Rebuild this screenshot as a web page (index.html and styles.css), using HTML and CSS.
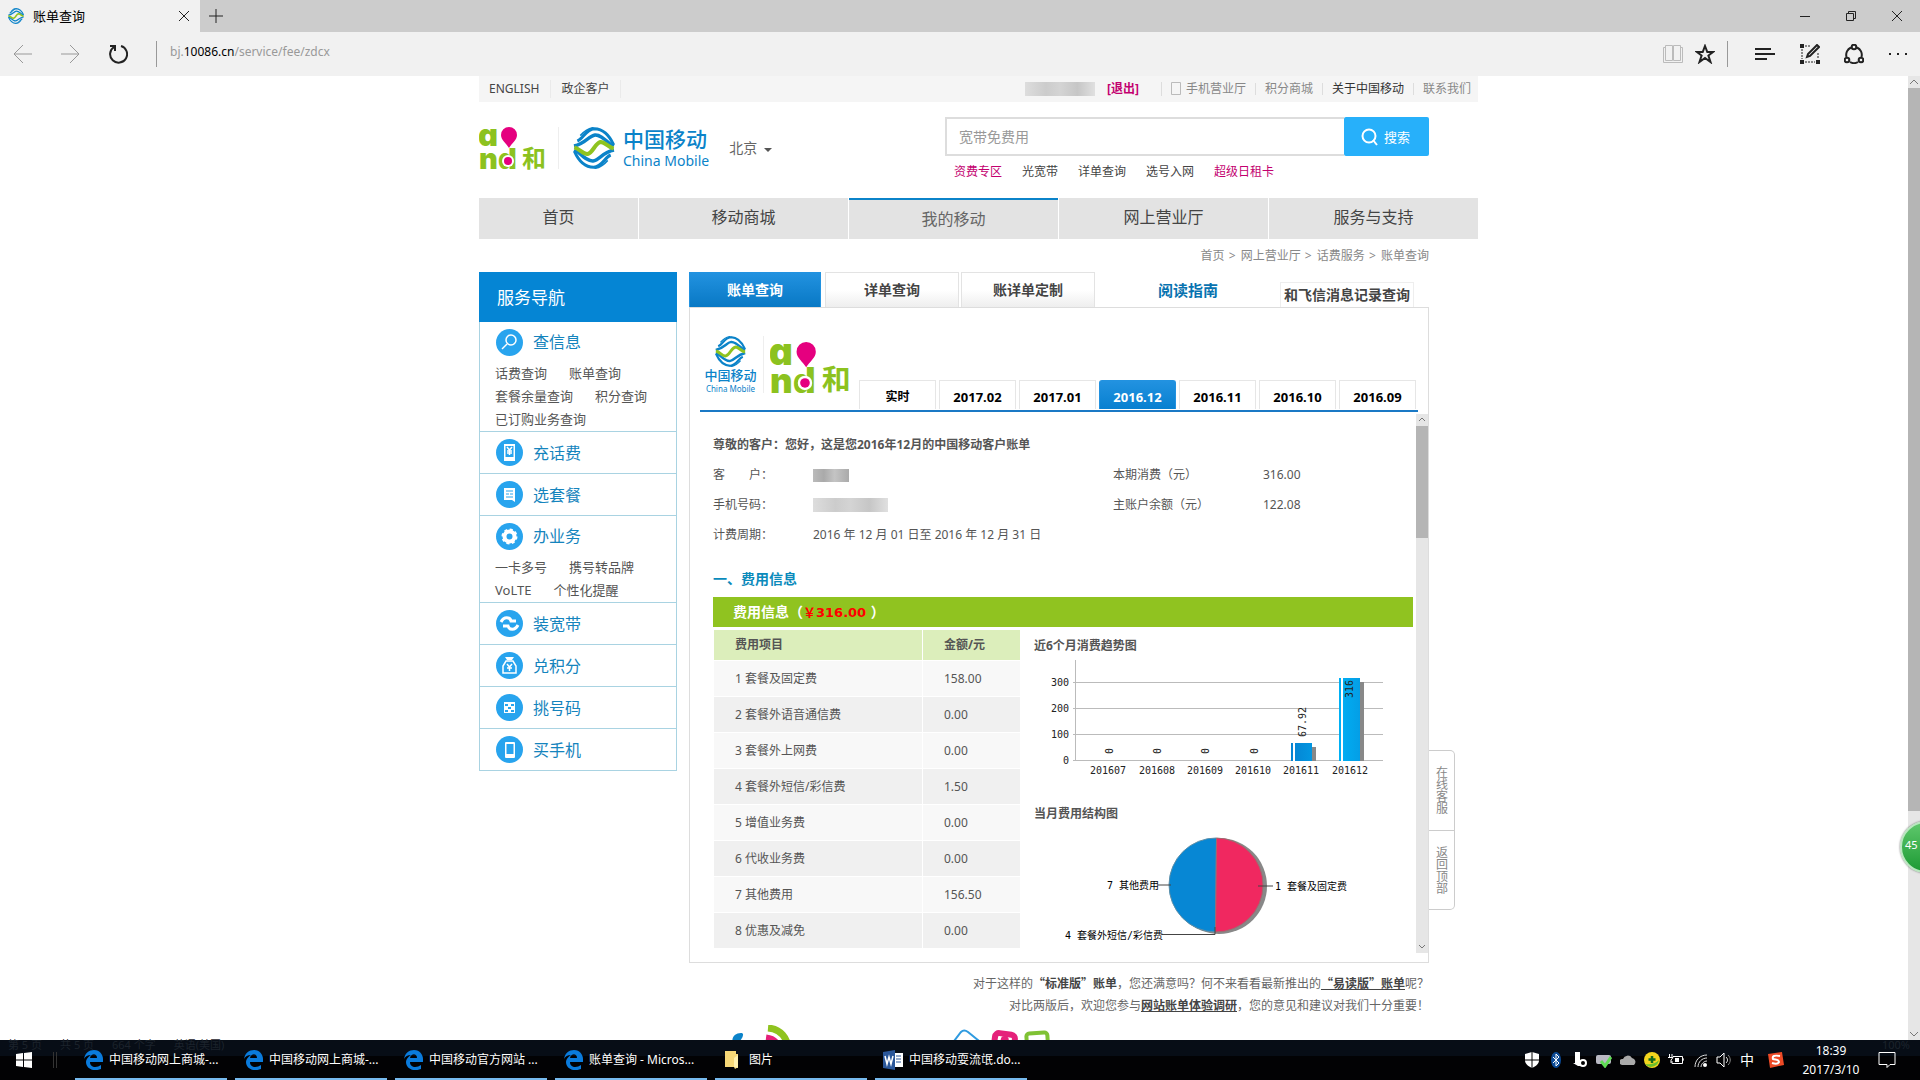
FILE: index.html
```html
<!DOCTYPE html>
<html lang="zh-CN">
<head>
<meta charset="utf-8">
<title>账单查询</title>
<link rel="stylesheet" href="styles.css">
</head>
<body>
<svg class="defs" aria-hidden="true">
  <symbol id="cm" viewBox="0 0 126 126">
    <g id="cm-half" fill="none" stroke="#0b83c9">
      <path d="M13 42C32 34 38 7 64 5C92 6 110 26 122 54" stroke-width="9"/>
      <path d="M3 57C38 50 46 27 66 24C84 23 98 40 121 59" stroke-width="10"/>
      <path d="M22 26C34 12 46 4 62 2" stroke-width="5"/>
    </g>
    <use href="#cm-half" transform="rotate(180 63 63)"/>
    <path d="M4 61C22 66 30 83 44 81C60 77 66 49 82 45C96 44 104 60 122 65" fill="none" stroke="#8fc31f" stroke-width="12"/>
  </symbol>
  <symbol id="edge" viewBox="0 0 20 20">
    <path d="M1 9C2 3 6 0 11 0c6 0 9 5 9 9v3H7c0 6 7 6 11 3v4C11 22 3 19 3 12c0-3 2-5 5-7C4 5 2 7 1 9zM7 8h7c0-5-6-5-7 0z" fill="#0a7bdc"/>
  </symbol>
</svg>

<header class="titlebar">
  <div class="wtab">
    <svg width="16" height="16"><use href="#cm"/></svg>
    <span>账单查询</span>
    <button aria-label="关闭标签页"><svg width="12" height="12" viewBox="0 0 12 12"><path d="M1 1l10 10M11 1L1 11"/></svg></button>
  </div>
  <button class="plus" aria-label="新标签页"><svg width="14" height="14" viewBox="0 0 14 14"><path d="M7 0v14M0 7h14"/></svg></button>
  <div class="winbtns">
    <button aria-label="最小化"><svg width="12" height="12" viewBox="0 0 12 12"><path d="M1 6.5h10"/></svg></button>
    <button aria-label="还原"><svg width="12" height="12" viewBox="0 0 12 12"><path d="M1.5 3.5h7v7h-7zM3.5 3V1.500h7v7H9"/></svg></button>
    <button aria-label="关闭"><svg width="12" height="12" viewBox="0 0 12 12"><path d="M1 1l10 10M11 1L1 11"/></svg></button>
  </div>
</header>
<nav class="toolbar" aria-label="浏览器">
  <button class="dim" aria-label="后退"><svg width="20" height="20" viewBox="0 0 20 20"><path d="M19 10H1M10 1L1 10l9 9"/></svg></button>
  <button class="dim" aria-label="前进"><svg width="20" height="20" viewBox="0 0 20 20"><path d="M1 10h18M10 1l9 9-9 9"/></svg></button>
  <button aria-label="刷新"><svg width="20" height="20" viewBox="0 0 20 20"><path d="M6 3a8.500 8.500 0 1 0 7-1M2 2h5v5" stroke-width="2"/></svg></button>
  <i class="sep"></i>
  <p class="url">bj.<b>10086.cn</b>/service/fee/zdcx</p>
  <div class="tools">
    <button class="faint" aria-label="阅读视图"><svg width="20" height="20" viewBox="0 0 20 20"><path d="M2.500 3.500h-2v15h19v-15h-2M2.500 1.500h7v15h-7zM10.500 1.500h7v15h-7z"/></svg></button>
    <button aria-label="收藏"><svg width="20" height="20" viewBox="0 0 20 20"><path d="M10 2l2.300 6H18l-4.600 3.500L15.500 18 10 14l-5.500 4 2.100-6.500L2 8h5.700z" stroke-width="2"/></svg></button>
    <i class="sep"></i>
    <button aria-label="中心"><svg width="20" height="20" viewBox="0 0 20 20"><path d="M0 5h16M0 10h20M0 15h12" stroke-width="2"/></svg></button>
    <button aria-label="笔记"><svg width="20" height="20" viewBox="0 0 20 20"><path d="M5 2h6M2 5v10M5 18h10M18 9v6" stroke-dasharray="2 1"/><path d="M0 0h4v4H0zM0 16h4v4H0zM16 16h4v4h-4z" fill="#222" stroke="none"/><path d="M7 13l1-3 9-9 2 2-9 9z" stroke-width="2"/></svg></button>
    <button aria-label="分享"><svg width="20" height="20" viewBox="0 0 20 20"><path d="M7 3.500A8 8 0 0 0 2.500 13M13 3.500A8 8 0 0 1 17.500 13M6 18a8 8 0 0 0 8 0" stroke-width="2"/><g stroke-width="2"><circle cx="10" cy="3" r="2.300"/><circle cx="3" cy="16" r="2.300"/><circle cx="17" cy="16" r="2.300"/></g></svg></button>
    <button aria-label="更多"><svg width="20" height="20" viewBox="0 0 20 20"><path d="M1 9h2v2H1zM9 9h2v2H9zM17 9h2v2h-2z" fill="#222" stroke="none"/></svg></button>
  </div>
</nav>

<div class="viewport">
  <div class="page">
    <div class="site">
      <div class="topbar">
        <a href="#">ENGLISH</a><a href="#">政企客户</a>
        <div class="user">
          <span class="mosaic m-user"></span>
          <a class="logout" href="#">[退出]</a>
          <a class="mobile" href="#"><svg width="10" height="14" viewBox="0 0 10 14"><path d="M.5.5h9v12h-9z" fill="none" stroke="#bbb"/></svg>手机营业厅</a>
          <a href="#">积分商城</a><a class="dark" href="#">关于中国移动</a><a href="#">联系我们</a>
        </div>
      </div>

      <div class="masthead">
        <svg class="and" width="68" height="44" viewBox="0 0 68 44">
          <text class="latin single-a" x="-1" y="19" font-size="31">a</text>
          <text class="latin" x="0" y="42" font-size="29">n</text>
          <text class="latin" x="19" y="42" font-size="29">d</text>
          <text class="he" x="43" y="40" font-size="24">和</text>
          <path d="M30 0a8 8 0 0 1 8 8c0 5-5 8-8 13c-3-5-8-8-8-13a8 8 0 0 1 8-8z" fill="#e5007f"/>
          <circle cx="29" cy="34" r="6" fill="#fff"/><circle cx="29" cy="34" r="4" fill="#e5007f"/>
        </svg>
        <a class="brand" href="#">
          <svg width="42" height="42"><use href="#cm"/></svg>
          <span><b>中国移动</b><em>China Mobile</em></span>
        </a>
        <button class="city">北京<i></i></button>
        <div class="searchbox">
          <form class="search">
            <input type="text" aria-label="搜索" placeholder="宽带免费用">
            <button type="button"><svg width="18" height="18" viewBox="0 0 18 18"><circle cx="8" cy="8" r="6.500"/><path d="M12 12l4 5"/></svg>搜索</button>
          </form>
          <div class="hot"><a class="pink" href="#">资费专区</a><a href="#">光宽带</a><a href="#">详单查询</a><a href="#">选号入网</a><a class="pink" href="#">超级日租卡</a></div>
        </div>
      </div>

      <nav class="mainnav"><a href="#">首页</a><a href="#">移动商城</a><a class="on" href="#">我的移动</a><a href="#">网上营业厅</a><a href="#">服务与支持</a></nav>
      <p class="crumbs"><a href="#">首页</a> &gt; <a href="#">网上营业厅</a> &gt; <a href="#">话费服务</a> &gt; <a href="#">账单查询</a></p>

      <div class="columns">
        <aside class="side">
          <h2>服务导航</h2>
          <section class="has-sub">
            <h3><svg viewBox="0 0 27 27"><circle class="disc" cx="13.500" cy="13.500" r="13.500"/><circle class="ln" cx="15" cy="11" r="5"/><path class="ln" d="M11 15l-5 5"/></svg>查信息</h3>
            <div class="subs"><a href="#">话费查询</a><a href="#">账单查询</a><br><a href="#">套餐余量查询</a><a href="#">积分查询</a><br><a href="#">已订购业务查询</a></div>
          </section>
          <section><h3><svg viewBox="0 0 27 27"><circle class="disc" cx="13.500" cy="13.500" r="13.500"/><path class="wt" d="M8 5h11v17H8z"/><path d="M9.500 7h8v11h-8z" fill="#28a4ee"/><path class="ln" d="M11 8l2.500 3L16 8M13.500 11v5M11 12h5M11 14h5"/></svg>充话费</h3></section>
          <section><h3><svg viewBox="0 0 27 27"><circle class="disc" cx="13.500" cy="13.500" r="13.500"/><path class="wt" d="M8 7h11v14l-3-2H8z"/><path d="M10 10h7M10 13h3M14 13h3M10 16h7" stroke="#28a4ee" fill="none"/></svg>选套餐</h3></section>
          <section class="has-sub">
            <h3><svg viewBox="0 0 27 27"><circle class="disc" cx="13.500" cy="13.500" r="13.500"/><circle cx="13.500" cy="13.500" r="5" fill="none" stroke="#fff" stroke-width="4"/><circle cx="13.500" cy="13.500" r="7" fill="none" stroke="#fff" stroke-width="2" stroke-dasharray="3 2.500"/></svg>办业务</h3>
            <div class="subs"><a href="#">一卡多号</a><a href="#">携号转品牌</a><br><a href="#">VoLTE</a><a href="#">个性化提醒</a></div>
          </section>
          <section><h3><svg viewBox="0 0 27 27"><circle class="disc" cx="13.500" cy="13.500" r="13.500"/><path d="M5 12c3-6 9-5 10-1h5M22 15c-3 6-9 5-10 1H7" fill="none" stroke="#fff" stroke-width="3"/></svg>装宽带</h3></section>
          <section><h3><svg viewBox="0 0 27 27"><circle class="disc" cx="13.500" cy="13.500" r="13.500"/><path class="wt" d="M9 5h9l-2 3h-5z"/><path class="ln" d="M10 9h7l3 5v7H7v-7zM11 12l2.500 3 2.500-3M13.500 15v4M11 16h5"/></svg>兑积分</h3></section>
          <section><h3><svg viewBox="0 0 27 27"><circle class="disc" cx="13.500" cy="13.500" r="13.500"/><path class="wt" d="M8 8h11v11H8z"/><path d="M9 10h3v2H9zM15 10h3v2h-3zM12 13h3v2h-3zM9 16h3v2H9zM15 16h3v2h-3z" fill="#28a4ee"/></svg>挑号码</h3></section>
          <section><h3><svg viewBox="0 0 27 27"><circle class="disc" cx="13.500" cy="13.500" r="13.500"/><rect x="9" y="6" width="10" height="16" rx="1" class="wt"/><path d="M10.500 8h7v10h-7z" fill="#28a4ee"/></svg>买手机</h3></section>
        </aside>

        <main class="main">
          <div class="tabs">
            <a class="tab on" href="#">账单查询</a><a class="tab" href="#">详单查询</a><a class="tab" href="#">账详单定制</a>
            <a class="guide" href="#">阅读指南</a><a class="feixin" href="#">和飞信消息记录查询</a>
          </div>
          <div class="panel">
            <div class="billhead">
              <div class="mini"><svg width="31" height="31"><use href="#cm"/></svg><b>中国移动</b><em>China Mobile</em></div>
              <svg class="and2" width="82" height="53" viewBox="0 0 68 44">
                <text class="latin single-a" x="-1" y="19" font-size="31">a</text>
                <text class="latin" x="0" y="42" font-size="29">n</text>
                <text class="latin" x="19" y="42" font-size="29">d</text>
                <text class="he" x="43" y="40" font-size="24">和</text>
                <path d="M30 0a8 8 0 0 1 8 8c0 5-5 8-8 13c-3-5-8-8-8-13a8 8 0 0 1 8-8z" fill="#e5007f"/>
                <circle cx="29" cy="34" r="6" fill="#fff"/><circle cx="29" cy="34" r="4" fill="#e5007f"/>
              </svg>
              <div class="months"><a class="now" href="#">实时</a><a href="#">2017.02</a><a href="#">2017.01</a><a class="on" href="#">2016.12</a><a href="#">2016.11</a><a href="#">2016.10</a><a href="#">2016.09</a></div>
            </div>
            <div class="scroll">
              <div class="bill">
                <p class="hello">尊敬的客户：您好，这是您2016年12月的中国移动客户账单</p>
                <dl class="facts">
                  <dt>客&emsp;&emsp;户：</dt><dd><span class="mosaic m-name"></span></dd><dt>本期消费（元）</dt><dd>316.00</dd>
                  <dt>手机号码：</dt><dd><span class="mosaic m-phone"></span></dd><dt>主账户余额（元）</dt><dd>122.08</dd>
                  <dt>计费周期：</dt><dd>2016 年 12 月 01 日至 2016 年 12 月 31 日</dd>
                </dl>
                <h2>一、费用信息</h2>
                <h3>费用信息（<strong>￥316.00 </strong>）</h3>
                <div class="split">
                  <table>
                    <thead><tr><th>费用项目</th><th>金额/元</th></tr></thead>
                    <tbody>
                      <tr><td>1 套餐及固定费</td><td>158.00</td></tr>
                      <tr><td>2 套餐外语音通信费</td><td>0.00</td></tr>
                      <tr><td>3 套餐外上网费</td><td>0.00</td></tr>
                      <tr><td>4 套餐外短信/彩信费</td><td>1.50</td></tr>
                      <tr><td>5 增值业务费</td><td>0.00</td></tr>
                      <tr><td>6 代收业务费</td><td>0.00</td></tr>
                      <tr><td>7 其他费用</td><td>156.50</td></tr>
                      <tr><td>8 优惠及减免</td><td>0.00</td></tr>
                    </tbody>
                  </table>
                  <div class="charts">
                    <h4>近6个月消费趋势图</h4>
                    <svg class="trend" width="360" height="128" viewBox="0 0 360 128">
                      <defs><linearGradient id="bar"><stop offset="0" stop-color="#0583d2"/><stop offset=".7" stop-color="#00b0f4"/><stop offset="1" stop-color="#049ee6"/></linearGradient></defs>
                      <path d="M40 26.500h310M40 52.500h310M40 78.500h310M40 104.500h310M42.500 4v101" stroke="#bbb" fill="none"/>
                      <g text-anchor="end"><text x="36" y="30">300</text><text x="36" y="56">200</text><text x="36" y="82">100</text><text x="36" y="108">0</text></g>
                      <path d="M263 91h20v14h-20zM311 26h20v79h-20z" fill="#888"/>
                      <path d="M258 87h21v18h-21zM306 22h21v83h-21z" fill="url(#bar)"/>
                      <path d="M260 87h2v18h-2zM308 22h2v83h-2z" fill="#fff"/>
                      <g text-anchor="middle"><text x="75" y="118">201607</text><text x="124" y="118">201608</text><text x="172" y="118">201609</text><text x="220" y="118">201610</text><text x="268" y="118">201611</text><text x="317" y="118">201612</text>
                      <text transform="translate(80 95) rotate(-90)">0</text><text transform="translate(128 95) rotate(-90)">0</text><text transform="translate(176 95) rotate(-90)">0</text><text transform="translate(225 95) rotate(-90)">0</text>
                      <text transform="translate(273 66) rotate(-90)">67.92</text><text transform="translate(320 33) rotate(-90)">316</text></g>
                    </svg>
                    <h4>当月费用结构图</h4>
                    <svg class="pie" width="360" height="116" viewBox="0 0 360 116">
                      <circle cx="186" cy="59" r="48" fill="#888"/>
                      <path d="M183.500 11a47 47 0 0 0-1 94z" fill="#0787d4" stroke="#5b8ea8"/>
                      <path d="M183.500 11a47 47 0 0 1-1 94z" fill="#f02860" stroke="#a06a70"/>
                      <path d="M125 58h13M225 59h15M129 107.500h53V100" fill="none" stroke="#444"/>
                      <text x="74" y="62">7 其他费用</text><text x="242" y="63">1 套餐及固定费</text><text x="32" y="112">4 套餐外短信/彩信费</text>
                    </svg>
                  </div>
                </div>
              </div>
              <div class="bar inner"><svg width="12" height="12" viewBox="0 0 12 12"><path d="M3 7l3-3 3 3"/></svg><i></i><svg width="12" height="12" viewBox="0 0 12 12"><path d="M3 4l3 3 3-3"/></svg></div>
            </div>
          </div>
          <div class="float"><a href="#">在线客服</a><a href="#">返回顶部</a></div>
          <p class="note">对于这样的<b>“标准版”账单</b>，您还满意吗？何不来看看最新推出的<a href="#">“易读版”账单</a>呢？<br>对比两版后，欢迎您参与<a href="#">网站账单体验调研</a>，您的意见和建议对我们十分重要！</p>
        </main>
      </div>
      <div class="footlogos">
        <svg width="320" height="40" viewBox="0 0 320 40" fill="none">
          <path d="M2 20C-2 14 2 8 9 8c5 0 0 8-5 12z" fill="#0b83c9"/>
          <path d="M36 3c12 1 20 9 21 25" stroke="#8fc31f" stroke-width="7"/><path d="M34 13c8 1 13 6 13 16" stroke="#e5207a" stroke-width="7"/>
          <path d="M219 20l10-13q3-3 7 0l16 13-15 16z" stroke="#2f9be0" stroke-width="2"/>
          <g transform="rotate(8 273 20)"><rect x="262" y="9" width="20" height="24" rx="4" stroke="#e5207a" stroke-width="6"/><circle cx="272" cy="15" r="4" fill="#e5207a"/></g>
          <rect x="295" y="8" width="21" height="26" rx="3" transform="rotate(-4 305 20)" stroke="#7fc234" stroke-width="4"/>
        </svg>
      </div>
    </div>
  </div>
  <div class="bar outer"><svg width="12" height="12" viewBox="0 0 12 12"><path d="M2 8l4-4 4 4"/></svg><i></i><svg width="12" height="12" viewBox="0 0 12 12"><path d="M2 4l4 4 4-4"/></svg></div>
  <div class="ball">45</div>
</div>

<footer class="taskbar">
  <div class="ghost"><span>第 5 页</span><span>共 5 页</span><span>664 个字</span><span>英语(美国)</span><span class="zoom">100%</span></div>
  <button class="start" aria-label="开始"><svg width="16" height="16" viewBox="0 0 16 16"><path d="M0 2l7-1v6.500H0zM8 1l8-1v7.500H8zM0 8.500h7V15l-7-1zM8 8.500h8V16l-8-1z" fill="#fff"/></svg></button>
  <i class="grip"></i>
  <div class="tasks">
    <button><svg width="20" height="20"><use href="#edge"/></svg>中国移动网上商城-...</button>
    <button><svg width="20" height="20"><use href="#edge"/></svg>中国移动网上商城-...</button>
    <button><svg width="20" height="20"><use href="#edge"/></svg>中国移动官方网站 ...</button>
    <button><svg width="20" height="20"><use href="#edge"/></svg>账单查询 - Micros...</button>
    <button><svg width="20" height="20" viewBox="0 0 20 20"><path d="M2 1h11v3h2v13l-3 2-1-2H2z" fill="#f6d777"/><path d="M11 17V8l4-3v13z" fill="#fff0ae"/></svg>图片</button>
    <button><svg width="20" height="20" viewBox="0 0 20 20"><path d="M11 3h9v14h-9z" fill="#fff"/><path d="M13 6h5M13 9h5M13 12h5" stroke="#2b579a"/><path d="M0 2l12-2v20L0 18z" fill="#2b579a"/><path d="M2 6l2 8 2-7 2 7 2-8" stroke="#fff" stroke-width="1.500" fill="none"/></svg>中国移动耍流氓.do...</button>
  </div>
  <div class="tray">
    <svg viewBox="0 0 16 16"><path d="M8 0l7 2v6c0 4-3 6-7 8-4-2-7-4-7-8V2z" fill="#fff"/><path d="M8 0v16M0 8h16" stroke="#000"/></svg>
    <svg viewBox="0 0 16 16"><ellipse cx="8" cy="8" rx="5" ry="8" fill="#0b4a96"/><path d="M5 5l6 6-3 3V2l3 3-6 6" fill="none" stroke="#fff"/></svg>
    <svg viewBox="0 0 16 16"><path d="M3 0h5v8h1v6H6l-5-3h2z" fill="#fff"/><circle cx="11" cy="11" r="3" fill="#000" stroke="#fff" stroke-width="2"/></svg>
    <svg viewBox="0 0 16 16"><rect y="3" width="15" height="9" rx="2" fill="#b9b9c4"/><path d="M5 9l4 5 6-9" fill="none" stroke="#5fdc54" stroke-width="3"/></svg>
    <svg viewBox="0 0 16 16"><path d="M2 13a3 3 0 0 1 1-6 5 5 0 0 1 9-1 4 4 0 0 1 2 7z" fill="#aaa"/></svg>
    <svg viewBox="0 0 16 16"><circle cx="8" cy="8" r="8" fill="#f3d51e"/><path d="M1 12a8 8 0 0 0 14-4c-4 4-9 5-14 4z" fill="#6abf2c"/><path d="M8 4v7M4.500 7.500h7" stroke="#136b1c" stroke-width="2.500"/></svg>
    <svg viewBox="0 0 16 16"><path d="M5 4.500h9.500v7H4V9M14.500 7H16v2M1.500 2v3M4 2v3M0 5.500h5L3 8v3" fill="none" stroke="#fff"/><path d="M7 6h4v4H7z" fill="#fff"/></svg>
    <svg viewBox="0 0 16 16"><path d="M3 15C3 8 8 3 15 3M6 15c0-5 4-9 9-9M9 15c0-3 3-6 6-6" fill="none" stroke="#ddd"/><circle cx="13" cy="13" r="2" fill="#fff"/></svg>
    <svg viewBox="0 0 16 16"><path d="M1 5h3l4-4v14l-4-4H1zM10 5c2 2 2 4 0 6" fill="none" stroke="#fff"/><path d="M12 3c3 3 3 7 0 10" fill="none" stroke="#888"/></svg>
    <span class="ime">中</span>
    <svg class="sogou" viewBox="0 0 16 16"><path d="M0 2l14-2 2 13-14 3z" fill="#ee4a26"/><path d="M12 4c-6-1-8 0-7 3 2 1 6 0 6 3-1 2-4 2-7 1" fill="none" stroke="#fff" stroke-width="2"/></svg>
  </div>
  <div class="clock"><span>18:39</span><span>2017/3/10</span></div>
  <button class="notice" aria-label="通知"><svg width="18" height="18" viewBox="0 0 18 18"><path d="M1 1.500h16v12h-5l-3 3v-3H1z" fill="none" stroke="#fff"/></svg></button>
</footer>
</body>
</html>
```
FILE: styles.css
```css
* { box-sizing: border-box; }
body {
  margin: 0; height: 100vh; display: flex; flex-direction: column; overflow: hidden;
  font: 12px/18px "Noto Sans", "Noto Sans CJK SC", sans-serif; color: #555; background: #fff;
}
h2, h3, h4, p, dl, dd { margin: 0; }
a { color: inherit; text-decoration: none; }
button { border: 0; background: none; padding: 0; font: inherit; color: inherit; display: flex; align-items: center; justify-content: center; }
svg { display: block; flex: none; }
em, i { font-style: normal; }
.defs { position: absolute; width: 0; height: 0; }
.latin { font-family: Inter, "Noto Sans", sans-serif; font-weight: 900; fill: #8cc21f; }
.single-a { font-feature-settings: "cv11"; }
.he { font-family: "Noto Sans CJK SC", sans-serif; font-weight: 700; fill: #8cc21f; }

/* browser frame */
.titlebar { flex: none; height: 32px; display: flex; background: #ccc; color: #000; }
.titlebar button svg, .toolbar button svg { fill: none; stroke: #222; }
.wtab { width: 200px; background: #f1f1f1; display: flex; align-items: center; gap: 9px; padding: 0 10px 0 8px; font-size: 13px; }
.wtab button { margin-left: auto; }
.plus { width: 32px; }
.winbtns { margin-left: auto; display: flex; }
.winbtns button { width: 46px; }
.toolbar { flex: none; height: 44px; display: flex; align-items: center; background: #f1f1f1; }
.toolbar button { width: 48px; }
.toolbar > button:first-child { width: 46px; }
.toolbar .dim svg { stroke: #999; }
.toolbar .faint svg { stroke: #bbb; }
.sep { width: 1px; height: 26px; background: #999; margin-left: 14px; }
.url { margin: -4px 0 0 13px; color: #999; }
.url b { color: #000; font-weight: 400; }
.tools { margin-left: auto; display: flex; align-items: center; }
.tools .faint, .tools .faint + button { width: 32px; }
.tools .sep { margin: 0 14px 0 6px; }
.tools .sep + button { width: 46px; }
.tools button:nth-last-child(-n+3) { width: 44px; }

.viewport { flex: 1; min-height: 0; display: flex; position: relative; }
.page { flex: 1; overflow: hidden; padding-left: 49px; }
.site { width: 999px; max-width: 100%; margin: 0 auto; }
.bar { flex: none; width: 12px; background: #e6e6e6; display: flex; flex-direction: column; }
.bar svg { fill: none; stroke: #777; }
.bar i { background: #b5b5b5; }
.bar svg:last-child { margin-top: auto; }
.outer i { height: 75%; }
.inner i { height: 112px; }
.ball { position: absolute; right: -32px; top: 745px; width: 52px; height: 52px; border-radius: 50%; background: linear-gradient(#5fc86c, #1c9a34); border: 2px solid #b9e6bf; box-shadow: 0 0 2px #555; color: #fff; font-size: 11px; line-height: 44px; padding-left: 3px; }

/* header */
.topbar { height: 26px; background: #f5f5f5; display: flex; align-items: center; color: #444; }
.topbar > a { padding: 0 11px 0 10px; border-right: 1px solid #eaeaea; }
.user { margin-left: auto; display: flex; align-items: center; color: #888; padding-right: 7px; }
.user a + a { padding-left: 9px; margin-left: 9px; border-left: 1px solid #ddd; line-height: 12px; }
.user .mobile { display: flex; align-items: center; gap: 5px; margin-left: 22px; }
.user .dark { color: #333; }
.user .logout { color: #c3006f; font-weight: 700; margin-left: 12px; }
.mosaic { display: block; background: linear-gradient(90deg, #ddd, #ccc 30%, #d4d4d4 50%, #c6c6c6 75%, #e0e0e0); }
.m-user { width: 70px; height: 14px; }
.m-name { width: 36px; height: 13px; background: linear-gradient(90deg, #bbb, #aaa 30%, #c4c4c4 60%, #aaa); }
.m-phone { width: 75px; height: 14px; }
.masthead { height: 96px; display: flex; align-items: flex-start; padding-top: 15px; }
.and { margin-top: 10px; }
.brand { display: flex; align-items: center; gap: 8px; color: #0b83c9; border-left: 1px solid #eee; margin: 10px 0 0 11px; padding-left: 14px; height: 42px; }
.brand b, .brand em { display: block; line-height: 18px; }
.brand b { font-size: 21px; font-weight: 500; line-height: 26px; }
.brand em { font-size: 14px; }
.city { margin: 22px 0 0 20px; font-size: 14px; gap: 7px; color: #666; }
.city i { border: 4px solid transparent; border-top-color: #555; border-bottom: 0; margin-top: 4px; }
.searchbox { width: 484px; margin: 0 49px 0 auto; }
.search { display: flex; height: 39px; }
.search input { flex: 1; min-width: 0; border: 2px solid #ddd; border-right: 0; padding: 0 12px; font: inherit; font-size: 14px; outline: 0; }
.search input::placeholder { color: #999; opacity: 1; }
.search button { width: 85px; background: #27b0fa; color: #fff; font-size: 13px; gap: 5px; border-radius: 2px; padding-right: 2px; }
.search button svg { fill: none; stroke: #fff; stroke-width: 2; }
.hot { display: flex; gap: 20px; padding: 7px 9px; color: #444; }
.pink { color: #c3006f; }
.mainnav { display: grid; grid-template-columns: 159px 1fr 1fr 1fr 1fr; gap: 1px; height: 39px; }
.mainnav a { background: #e3e3e3; font-size: 16px; color: #444; text-align: center; line-height: 39px; }
.mainnav .on { border-top: 2px solid #0b83c9; color: #666; }
.crumbs { text-align: right; padding: 10px 49px 7px 0; color: #888; word-spacing: 0; }
.crumbs a { margin-left: 2px; }
.crumbs a:not(:last-child) { margin-right: 1px; }

/* columns */
.columns { display: flex; align-items: flex-start; gap: 12px; }
.side { width: 198px; border: 1px solid #a9d3e2; border-width: 0 1px; }
.side h2 { height: 50px; margin: 0 -1px; padding-left: 18px; background: #0585d4; color: #fff; font: 400 17px/50px "Noto Sans CJK SC", sans-serif; }
.side section { border-bottom: 1px solid #a9d3e2; }
.side h3 { display: flex; align-items: center; gap: 10px; height: 41px; padding-left: 16px; font-size: 16px; font-weight: 400; color: #1584bd; }
.side h3 svg { width: 27px; height: 27px; }
.side .has-sub h3 { height: 40px; }
.disc { fill: #28a4ee; }
.ln { fill: none; stroke: #fff; stroke-width: 1.500; }
.wt { fill: #fff; }
.subs { padding-left: 15px; font-size: 13px; line-height: 23px; }
.subs a { margin-right: 22px; }
.main { width: 740px; position: relative; }
.tabs { display: flex; align-items: flex-end; gap: 2px; height: 35px; font-weight: 700; font-size: 14px; color: #444; }
.tab { width: 134px; height: 35px; line-height: 34px; text-align: center; border: 1px solid #e3e3e3; border-bottom: 0; background: linear-gradient(#fff, #fff 50%, #eee); }
.tab.on { width: 132px; margin-right: 2px; color: #fff; background: linear-gradient(#2292e0, #0878c4); border-color: #2292e0; }
.guide { color: #0873b0; font-size: 15px; line-height: 34px; margin-left: 61px; }
.feixin { margin: 0 15px 0 auto; padding: 0 3px; border: 1px solid #eee; border-bottom: 0; line-height: 24px; }
.panel { border: 1px solid #ddd; height: 656px; padding-top: 28px; }
.billhead { display: flex; margin: 0 10px; height: 76px; border-bottom: 2px solid #1a79c5; }
.mini { width: 64px; display: flex; flex-direction: column; align-items: center; color: #0b83c9; padding: 0 5px 0 3px; border-right: 1px solid #eee; height: 57px; }
.mini b { font-size: 13px; font-weight: 500; line-height: 17px; }
.mini em { font-size: 8px; line-height: 9px; white-space: nowrap; }
.and2 { margin: 6px 0 0 6px; }
.months { margin-left: auto; display: flex; gap: 3px; align-self: flex-end; padding: 0 2px 1px 0; }
.months a { width: 77px; height: 29px; line-height: 32px; border: 1px solid #e6e6e6; border-bottom: 0; text-align: center; font-weight: 700; font-size: 13px; color: #000; }
.months .now { font-size: 12px; }
.months .on { color: #fff; background: linear-gradient(#2292e0, #0880d0); border-color: #2292e0; border-radius: 3px 3px 0 0; }
.scroll { display: flex; margin-top: 2px; height: 539px; overflow: hidden; }
.bill { flex: 1; padding: 22px 3px 0 23px; }
.hello { font-weight: 700; }
.facts { display: grid; grid-template-columns: 100px 300px 150px 1fr; grid-auto-rows: 30px; align-items: center; margin-top: 6px; }
.bill h2 { font-size: 14px; line-height: 20px; color: #0a8abb; margin-top: 19px; }
.bill h3 { height: 30px; margin-top: 8px; padding-left: 20px; background: #90c320; color: #fff; font-size: 14px; line-height: 30px; }
.bill h3 strong { color: #f00; font: 700 13px "DejaVu Sans", "Noto Sans CJK SC", sans-serif; }
.split { display: flex; gap: 12px; }
table { width: 308px; border-spacing: 1px 1px; margin-top: 2px; }
th, td { text-align: left; padding: 0 0 0 21px; }
th { background: #dceebb; height: 30px; }
th:first-child { width: 208px; }
td { height: 35px; background: #f8f8f8; }
tr:nth-child(even) td { background: #f0f0f0; }
.charts { padding-top: 10px; }
.charts h4 { font-size: 12px; line-height: 18px; padding-left: 1px; }
.charts text { font: 10px "DejaVu Sans Mono", "Noto Sans CJK SC", monospace; fill: #222; }
.trend { margin: 1px 0 21px; }
.pie { margin-top: 4px; }
.pie text { fill: #000; }
.float { position: absolute; left: 740px; top: 478px; width: 26px; border: 1px solid #ccc; border-left: 0; border-radius: 0 5px 5px 0; color: #888; }
.float a { display: block; height: 79px; padding: 16px 7px; line-height: 12px; width: 26px; word-break: break-all; }
.float a + a { border-top: 1px solid #ccc; }
.note { text-align: right; padding: 9px 0 0; line-height: 22px; color: #666; font-family: "Noto Sans CJK SC", sans-serif; }
.note b, .note a { font-weight: 700; color: #444; }
.note a { text-decoration: underline; }
.footlogos { padding: 9px 0 0 253px; }

/* task bar */
.taskbar { flex: none; height: 40px; display: flex; position: relative; color: #fff; background: linear-gradient(#070d16 16px, #020204 16px); }
.ghost { position: absolute; left: 8px; right: 10px; top: -1px; display: flex; gap: 18px; font-size: 11px; line-height: 12px; color: #1c232c; }
.ghost .zoom { margin-left: auto; }
.start { width: 48px; }
.grip { width: 4px; height: 16px; margin: 12px 0 0 5px; border: 1px solid #333; border-width: 0 1px; }
.tasks { display: flex; gap: 8px; margin-left: 18px; }
.tasks button { width: 152px; justify-content: flex-start; padding: 1px 0 0 8px; gap: 6px; border-bottom: 2px solid #76b9ed; white-space: nowrap; overflow: hidden; }
.tray { margin-left: auto; display: flex; align-items: center; gap: 8px; }
.tray svg { width: 16px; height: 16px; }
.ime { font-size: 14px; }
.tray .sogou { margin-left: 6px; }
.clock { width: 80px; margin-left: 7px; display: flex; flex-direction: column; justify-content: center; text-align: center; }
.clock span { line-height: 19px; }
.notice { width: 32px; margin-right: 17px; }
```
